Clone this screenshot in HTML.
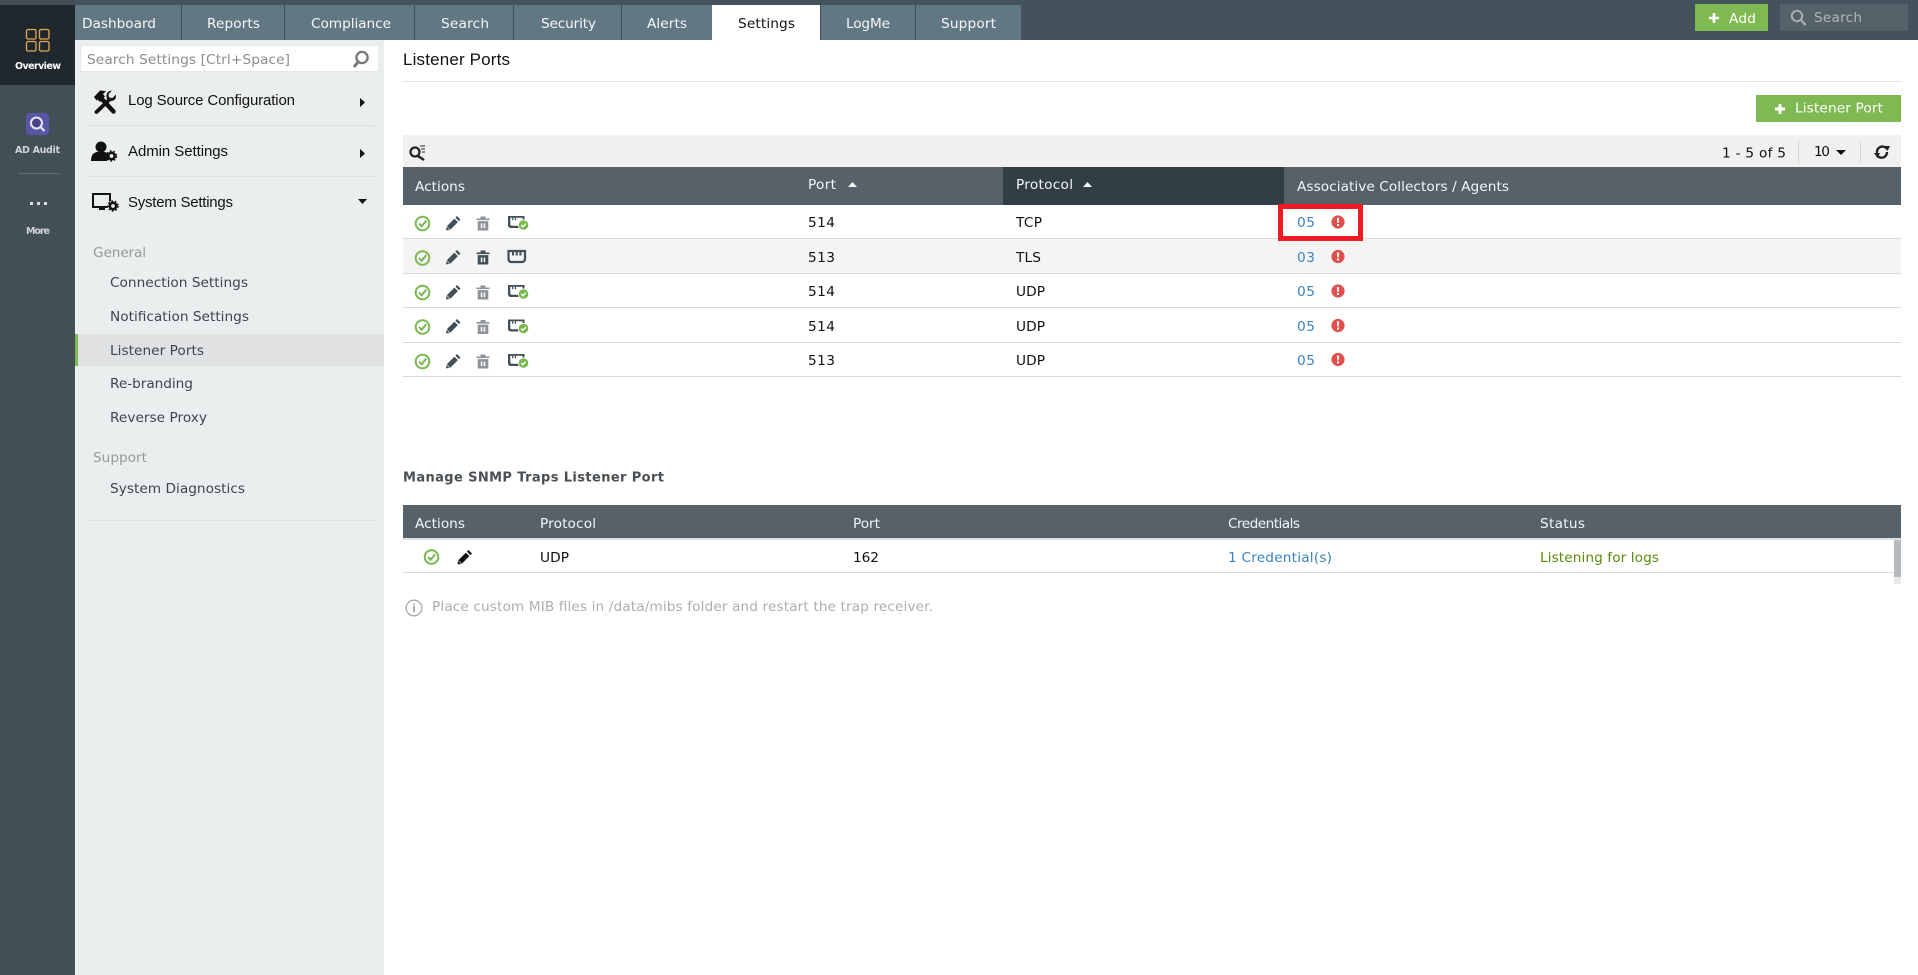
<!DOCTYPE html>
<html lang="en">
<head>
<meta charset="utf-8">
<title>Listener Ports</title>
<style>
html,body{margin:0;padding:0;background:#fff;width:1918px;height:975px;overflow:hidden}
svg{position:absolute;left:0;top:0;display:block}
text{font-family:"DejaVu Sans",sans-serif;font-size:13.7px;fill:#222}
.tab{fill:#f4f7f8}
.h{font-family:"Liberation Sans",sans-serif;font-size:15px;fill:#111}
.m{fill:#3b4650}
.g{fill:#999}
.th{fill:#f2f5f6}
.d{fill:#111}
.l{fill:#3b83c0}
.r{font-size:9.500px;font-weight:bold;fill:#cfd3d5}
</style>
</head>
<body>
<svg width="1918" height="975" viewBox="0 0 1918 975" xmlns="http://www.w3.org/2000/svg">
<defs>
<g id="ok"><circle cx="0" cy="0" r="6.800" fill="none" stroke="#78b84e" stroke-width="2"/><path d="M-3.500 0 L-.9 2.800 L3.800-2.800" fill="none" stroke="#78b84e" stroke-width="2"/></g>
<path id="pen" d="M3.500-7 L7-3.500 L5.400-1.900 L1.900-5.400Z M.9-4.400 L4.400-.9 L-3.200 6.700 L-6.700 3.200Z M-7 3.800 L-3.800 7 L-7.400 7.400Z"/>
<g id="tr"><path d="M-6.500-5 H6.500 V-3.400 H-6.500Z M-2.500-7 H2.500 V-5 H-2.500Z M-5.300-2.400 H5.300 V7 H-5.300Z"/><path d="M-2.200 0 H-.7 V4.600 H-2.200Z M.7 0 H2.200 V4.600 H.7Z" fill="#fff"/></g>
<g id="pt"><path d="M-8.500-6 H8 V3 Q8 6 5 6 H-5.500 Q-8.500 6-8.500 3Z M-6.200-4.300 V2 Q-6.200 3.800-4.500 3.800 H6 V-4.300Z" fill="#434f57" fill-rule="evenodd"/><path d="M-4.400-4.300 H-3.100V-1.800 H-4.400Z M-1.700-4.300 H-.4V-1.800 H-1.700Z" fill="#434f57"/></g>
<g id="ptok"><use href="#pt"/><circle cx="7" cy="3" r="5.600" fill="#fff"/><circle cx="7" cy="3" r="4.800" fill="#78b84e"/><path d="M4.700 3 L6.400 4.700 L9.300 1.700" fill="none" stroke="#fff" stroke-width="1.400"/></g>
<g id="err"><circle r="6.600" fill="#e0504c"/><path d="M-1.100-4 H1.100 L.7 1 H-.7Z M-1 2 H1 V4 H-1Z" fill="#fff"/></g>
</defs>

<!-- Top bar and rail -->
<rect x="0" y="0" width="1918" height="40" fill="#44525b"/>
<rect x="0" y="0" width="75" height="975" fill="#434f57"/>
<rect x="0" y="5" width="75" height="80" fill="#20282e"/>
<g fill="none" stroke="#e3a853" stroke-width="1.300">
<rect x="26.500" y="29.500" width="9.500" height="9.500" rx="1.500"/><rect x="39.500" y="29.500" width="9.500" height="9.500" rx="1.500"/>
<rect x="26.500" y="41.500" width="9.500" height="9.500" rx="1.500"/><rect x="39.500" y="41.500" width="9.500" height="9.500" rx="1.500"/>
</g>
<text x="15" y="69" textLength="46" class="r" style="fill:#fff">Overview</text>
<rect x="26" y="113" width="23" height="22" rx="3" fill="#5a56a6"/>
<circle cx="36.500" cy="123" r="5.500" fill="#46438a" stroke="#e6e6f0" stroke-width="2"/><path d="M40.500 127 L44.500 131" stroke="#e6e6f0" stroke-width="2.200"/>
<text x="15" y="153" textLength="45" class="r">AD Audit</text>
<rect x="18" y="173" width="41" height="1" fill="#5f6c74"/>
<rect x="30" y="202" width="3" height="3" fill="#ddd"/><rect x="37" y="202" width="3" height="3" fill="#ddd"/><rect x="44" y="202" width="3" height="3" fill="#ddd"/>
<text x="26" y="234" textLength="24" class="r">More</text>

<!-- Tabs -->
<rect x="75" y="5" width="946" height="35" fill="#627784"/>
<rect x="712" y="5" width="108" height="35" fill="#fff"/>
<g fill="#3f4c55">
<rect x="181" y="5" width="1" height="35"/><rect x="284" y="5" width="1" height="35"/><rect x="414" y="5" width="1" height="35"/><rect x="513" y="5" width="1" height="35"/><rect x="621" y="5" width="1" height="35"/><rect x="820" y="5" width="1" height="35"/><rect x="915" y="5" width="1" height="35"/>
</g>
<text x="82" y="28" textLength="74" class="tab">Dashboard</text>
<text x="207" y="28" textLength="53" class="tab">Reports</text>
<text x="311" y="28" textLength="80" class="tab">Compliance</text>
<text x="441" y="28" textLength="48" class="tab">Search</text>
<text x="541" y="28" textLength="55" class="tab">Security</text>
<text x="647" y="28" textLength="40" class="tab">Alerts</text>
<text x="738" y="28" textLength="57" class="tab" style="fill:#111">Settings</text>
<text x="846" y="28" textLength="44" class="tab">LogMe</text>
<text x="941" y="28" textLength="55" class="tab">Support</text>

<!-- Top right -->
<rect x="1695" y="4" width="73" height="27" fill="#7fb951"/>
<path d="M1709 18 H1719 M1714 13 V23" stroke="#fff" stroke-width="2.600"/>
<text x="1729" y="23" textLength="27" style="fill:#fff">Add</text>
<rect x="1780" y="4" width="128" height="27" fill="#56626a"/>
<circle cx="1797" cy="16" r="5.200" fill="none" stroke="#a8aeb2" stroke-width="2"/><path d="M1801 20 L1805.500 25" stroke="#a8aeb2" stroke-width="2.400"/>
<text x="1814" y="22" textLength="48" style="fill:#b0b5b9">Search</text>

<!-- Sidebar -->
<rect x="75" y="40" width="309" height="935" fill="#ebeeef"/>
<rect x="80.500" y="45.500" width="298" height="26" fill="#fff" stroke="#e4e6e7"/>
<text x="87" y="64" textLength="203" style="fill:#8b8b8b">Search Settings [Ctrl+Space]</text>
<circle cx="362" cy="57.500" r="5.600" fill="none" stroke="#777" stroke-width="2.300"/><path d="M358 62 L354 67" stroke="#777" stroke-width="3"/>

<!-- tools icon -->
<path d="M100 97 L113.500 111.500" stroke="#111" stroke-width="4.500" stroke-linecap="round" fill="none"/>
<path d="M94 97 L100 90.500 L106 91 L103 94 L105 96.500 L100 102 L97.500 99.500 L96.500 100.500Z" fill="#111"/>
<path d="M109.500 99.500 L96.500 112" stroke="#111" stroke-width="3.800" stroke-linecap="round" fill="none"/>
<path d="M112 90.500 L108.500 94 L109 97.500 L112.500 98 L116 94.500 Q116.500 100 112 101 Q110 101.500 108 100.500 Q106 98 106.500 95 Q107 91 112 90.500Z" fill="#111"/>
<text x="128" y="105" textLength="167" class="h">Log Source Configuration</text>
<path d="M360 98 L365 102.500 L360 107Z" fill="#111"/>
<rect x="88" y="125" width="287" height="1" fill="#dcdfe1"/>

<!-- admin icon -->
<circle cx="101" cy="147" r="5.500" fill="#111"/><path d="M91 161 Q91 153 97 152 L105 152 Q109 153 109 157 L107 161Z" fill="#111"/>
<circle cx="111.500" cy="156" r="3.200" fill="none" stroke="#111" stroke-width="2.600"/><circle cx="111.500" cy="156" r="5" fill="none" stroke="#111" stroke-width="1.400" stroke-dasharray="1.800 1.800"/>
<text x="128" y="156" textLength="100" class="h">Admin Settings</text>
<path d="M360 149 L365 153.500 L360 158Z" fill="#111"/>
<rect x="88" y="176" width="287" height="1" fill="#dcdfe1"/>

<!-- system icon -->
<rect x="93" y="194" width="17" height="13" fill="none" stroke="#111" stroke-width="2"/>
<rect x="99" y="208" width="6" height="2" fill="#111"/>
<circle cx="113" cy="206" r="5.500" fill="#ebeeef"/>
<circle cx="113" cy="206" r="3.200" fill="none" stroke="#111" stroke-width="2.600"/><circle cx="113" cy="206" r="5" fill="none" stroke="#111" stroke-width="1.400" stroke-dasharray="1.800 1.800"/>
<text x="128" y="207" textLength="105" class="h">System Settings</text>
<path d="M358 199 H367 L362.500 204Z" fill="#111"/>

<text x="93" y="257" textLength="53" class="g">General</text>
<rect x="75" y="334" width="309" height="32" fill="#e0e1e3"/>
<rect x="75" y="334" width="3" height="32" fill="#7fb951"/>
<text x="110" y="287" textLength="138" class="m">Connection Settings</text>
<text x="110" y="321" textLength="139" class="m">Notification Settings</text>
<text x="110" y="355" textLength="94" class="m">Listener Ports</text>
<text x="110" y="388" textLength="83" class="m">Re-branding</text>
<text x="110" y="422" textLength="97" class="m">Reverse Proxy</text>
<text x="93" y="462" textLength="54" class="g">Support</text>
<text x="110" y="493" textLength="135" class="m">System Diagnostics</text>
<rect x="88" y="520" width="287" height="1" fill="#dcdfe1"/>

<!-- Main -->
<text x="403" y="65" textLength="107" style="font-family:'Liberation Sans',sans-serif;font-size:17px;fill:#111">Listener Ports</text>
<rect x="403" y="81" width="1498" height="1" fill="#e2e2e2"/>
<rect x="1756" y="95" width="145" height="27" fill="#7fb951"/>
<path d="M1775 109 H1785 M1780 104 V114" stroke="#fff" stroke-width="3"/>
<text x="1795" y="112.500" textLength="88" style="fill:#fff">Listener Port</text>

<!-- Toolbar -->
<rect x="403" y="135" width="1498" height="32" fill="#f0f0f0"/>
<circle cx="415" cy="152" r="4.500" fill="none" stroke="#222" stroke-width="2.200"/><path d="M418 156 L424 160" stroke="#222" stroke-width="2.400"/>
<path d="M420 146 H425 M421 149 H425 M422 152 H425" stroke="#222" stroke-width="1"/>
<text x="1722" y="157.500" textLength="64" class="d">1 - 5 of 5</text>
<rect x="1798" y="141" width="1" height="22" fill="#d2d2d2"/>
<text x="1814" y="156" textLength="16" class="d">10</text>
<path d="M1836 150 H1846 L1841 155Z" fill="#111"/>
<rect x="1860" y="141" width="1" height="22" fill="#d2d2d2"/>
<path d="M1877 153 A5.500 5.500 0 0 1 1887 149 M1887 152 A5.500 5.500 0 0 1 1877.500 156" fill="none" stroke="#222" stroke-width="2.400"/>
<path d="M1884 146 L1890 146 L1887.500 151Z M1874 153 L1880 153 L1877.500 158Z" fill="#222"/>

<!-- Table 1 -->
<rect x="403" y="167" width="1498" height="38" fill="#566169"/>
<rect x="1003" y="167" width="281" height="38" fill="#313e46"/>
<text x="415" y="191" textLength="50" class="th">Actions</text>
<text x="808" y="189" textLength="28" class="th">Port</text>
<path d="M848 187 L852.500 182 L857 187Z" fill="#f2f5f6"/>
<text x="1016" y="189" textLength="57" class="th">Protocol</text>
<path d="M1083 187 L1087.500 182 L1092 187Z" fill="#f2f5f6"/>
<text x="1297" y="191" textLength="212" class="th">Associative Collectors / Agents</text>

<rect x="403" y="239" width="1498" height="34" fill="#f4f4f4"/>
<g fill="#d8d8d8">
<rect x="403" y="238" width="1498" height="1"/><rect x="403" y="273" width="1498" height="1"/><rect x="403" y="307" width="1498" height="1"/><rect x="403" y="342" width="1498" height="1"/><rect x="403" y="376" width="1498" height="1"/>
</g>

<use href="#ok" x="422.500" y="223.500"/><use href="#pen" x="453.500" y="223" fill="#434f57"/><use href="#tr" x="483" y="223.500" fill="#8f9297"/><use href="#ptok" x="516.500" y="222"/>
<use href="#ok" x="422.500" y="258"/><use href="#pen" x="453.500" y="257" fill="#434f57"/><use href="#tr" x="483" y="257.500" fill="#434f57"/>
<path d="M508.500 251 H525 V258.500 Q525 262 522 262 H511.500 Q508.500 262 508.500 258.500Z" fill="none" stroke="#434f57" stroke-width="2.200"/><path d="M512 252 H514 V255.500 H512Z M515.700 252 H517.700 V255.500 H515.700Z M519.400 252 H521.400 V255.500 H519.400Z" fill="#434f57"/>
<use href="#ok" x="422.500" y="292.500"/><use href="#pen" x="453.500" y="292" fill="#434f57"/><use href="#tr" x="483" y="292.500" fill="#8f9297"/><use href="#ptok" x="516.500" y="291"/>
<use href="#ok" x="422.500" y="327"/><use href="#pen" x="453.500" y="326" fill="#434f57"/><use href="#tr" x="483" y="327" fill="#8f9297"/><use href="#ptok" x="516.500" y="325.500"/>
<use href="#ok" x="422.500" y="361.500"/><use href="#pen" x="453.500" y="361" fill="#434f57"/><use href="#tr" x="483" y="361.500" fill="#8f9297"/><use href="#ptok" x="516.500" y="360"/>

<text x="808" y="227" textLength="27" class="d">514</text><text x="1016" y="227" textLength="26" class="d">TCP</text><text x="1297" y="227" textLength="18" class="l">05</text>
<text x="808" y="262" textLength="27" class="d">513</text><text x="1016" y="262" textLength="25" class="d">TLS</text><text x="1297" y="262" textLength="18" class="l">03</text>
<text x="808" y="296" textLength="27" class="d">514</text><text x="1016" y="296" textLength="29" class="d">UDP</text><text x="1297" y="296" textLength="18" class="l">05</text>
<text x="808" y="331" textLength="27" class="d">514</text><text x="1016" y="331" textLength="29" class="d">UDP</text><text x="1297" y="331" textLength="18" class="l">05</text>
<text x="808" y="365" textLength="27" class="d">513</text><text x="1016" y="365" textLength="29" class="d">UDP</text><text x="1297" y="365" textLength="18" class="l">05</text>

<use href="#err" x="1338" y="222"/><use href="#err" x="1338" y="256.500"/><use href="#err" x="1338" y="291"/><use href="#err" x="1338" y="325.500"/><use href="#err" x="1338" y="359.500"/>
<rect x="1280.500" y="206.500" width="80" height="32" fill="none" stroke="#ed1c24" stroke-width="5"/>

<!-- SNMP -->
<text x="403" y="481.500" textLength="261" style="font-size:13px;font-weight:bold;fill:#4a4f53">Manage SNMP Traps Listener Port</text>
<rect x="403" y="505" width="1498" height="33" fill="#566169"/>
<rect x="403" y="538" width="1498" height="2" fill="#dedede"/>
<text x="415" y="528" textLength="50" class="th">Actions</text>
<text x="540" y="528" textLength="56" class="th">Protocol</text>
<text x="853" y="528" textLength="27" class="th">Port</text>
<text x="1228" y="528" textLength="72" class="th">Credentials</text>
<text x="1540" y="528" textLength="45" class="th">Status</text>
<use href="#ok" x="431.500" y="557"/><use href="#pen" x="465" y="557" fill="#111"/>
<text x="540" y="562" textLength="29" class="d">UDP</text>
<text x="853" y="562" textLength="26" class="d">162</text>
<text x="1228" y="562" textLength="104" class="l">1 Credential(s)</text>
<text x="1540" y="562" textLength="119" style="fill:#5a8a0a">Listening for logs</text>
<rect x="403" y="572" width="1491" height="1" fill="#d8d8d8"/>
<rect x="1894" y="540" width="7" height="37" fill="#b8bbbd"/>
<rect x="1894" y="577" width="7" height="7" fill="#e8eaea"/>
<circle cx="414" cy="608" r="7.800" fill="none" stroke="#aaa" stroke-width="1.300"/><rect x="413.200" y="606" width="1.600" height="6" fill="#999"/><rect x="413.200" y="603.500" width="1.600" height="1.600" fill="#999"/>
<text x="432" y="611" textLength="501" style="fill:#aeaeae">Place custom MIB files in /data/mibs folder and restart the trap receiver.</text>
</svg>
</body>
</html>
